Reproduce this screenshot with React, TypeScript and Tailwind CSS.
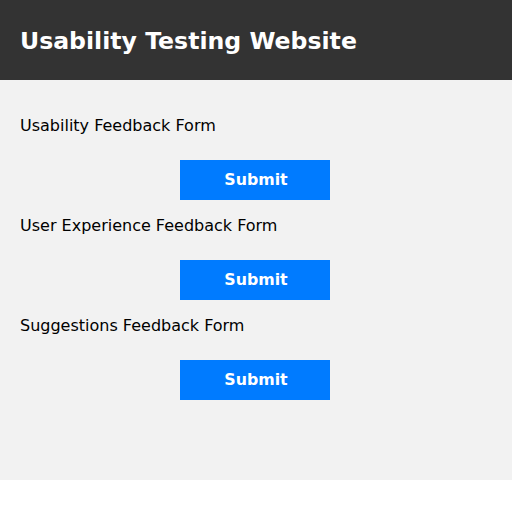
import type { FC } from 'react';

const forms = ['Usability Feedback Form', 'User Experience Feedback Form', 'Suggestions Feedback Form'];

const FeedbackForm: FC<{ label: string }> = ({ label }) => (
  <form className="flex h-[100px] flex-col pt-[16px]" onSubmit={(e) => e.preventDefault()}>
    <label className="text-[16px] leading-[20px] text-black">{label}</label>
    <button
      type="submit"
      className="ml-[160px] mt-[24px] h-[40px] w-[150px] bg-[#007bff] pl-[2px] text-[15.8px] font-bold text-white"
    >
      Submit
    </button>
  </form>
);

export default function App() {
  return (
    <div className="font-['DejaVu_Sans',sans-serif]">
      <header className="flex h-[80px] items-center bg-[#333333] px-[20px] pt-[3px]">
        <h1 className="text-[23.6px] font-bold text-white">Usability Testing Website</h1>
      </header>
      <main className="h-[400px] bg-[#f2f2f2] px-[20px] pt-[20px]">
        {forms.map((f) => (
          <FeedbackForm key={f} label={f} />
        ))}
      </main>
    </div>
  );
}
